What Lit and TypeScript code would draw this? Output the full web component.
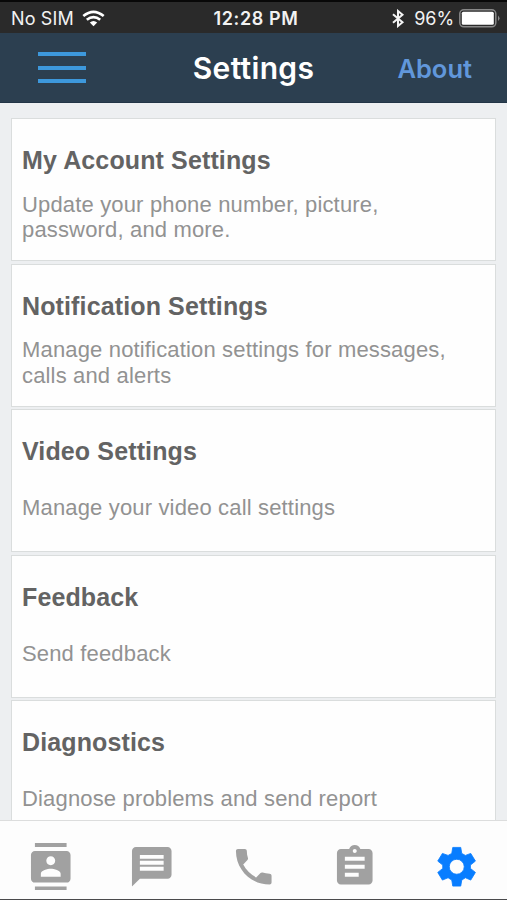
import { LitElement, html, css, svg } from "lit";
import { customElement } from "lit/decorators.js";
import { classMap } from "lit/directives/class-map.js";

interface Item { title: string; lines: string[]; }

const items: Item[] = [
  { title: "My Account Settings", lines: ["Update your phone number, picture,", "password, and more."] },
  { title: "Notification Settings", lines: ["Manage notification settings for messages,", "calls and alerts"] },
  { title: "Video Settings", lines: ["Manage your video call settings"] },
  { title: "Feedback", lines: ["Send feedback"] },
  { title: "Diagnostics", lines: ["Diagnose problems and send report"] },
];

const tabs = [
  { name: "Contacts", active: false, shape: svg`<path d="M20 0H4v2h16V0zM4 24h16v-2H4v2zM20 4H4c-1.1 0-2 .9-2 2v12c0 1.1.9 2 2 2h16c1.1 0 2-.9 2-2V6c0-1.1-.9-2-2-2zm-8 2.750c1.240 0 2.250 1.010 2.250 2.250s-1.010 2.250-2.250 2.250S9.750 10.240 9.750 9 10.760 6.750 12 6.750zM17 17H7v-1.500c0-1.670 3.330-2.500 5-2.500s5 .83 5 2.500V17z"/>` },
  { name: "Messages", active: false, shape: svg`<path d="M20 2H4c-1.1 0-1.990.9-1.990 2L2 22l4-4h14c1.1 0 2-.9 2-2V4c0-1.1-.9-2-2-2zM6 6h12v2H6V6zm0 3h12v2H6V9zm12 5H6v-2h12v2z"/>` },
  { name: "Calls", active: false, shape: svg`<path d="M6.620 10.790c1.440 2.830 3.760 5.140 6.590 6.590l2.200-2.200c.27-.27.67-.36 1.020-.24 1.120.37 2.330.57 3.570.57.55 0 1 .45 1 1V20c0 .55-.45 1-1 1-9.390 0-17-7.610-17-17 0-.55.45-1 1-1h3.500c.55 0 1 .45 1 1 0 1.250.2 2.450.57 3.570.11.35.03.74-.25 1.020l-2 2.200z"/>` },
  { name: "Tasks", active: false, shape: svg`<path d="M19 3h-4.180C14.400 1.840 13.300 1 12 1c-1.300 0-2.400.84-2.820 2H5c-1.1 0-2 .9-2 2v14c0 1.1.9 2 2 2h14c1.1 0 2-.9 2-2V5c0-1.1-.9-2-2-2zm-7 0c.55 0 1 .45 1 1s-.45 1-1 1-1-.45-1-1 .45-1 1-1zm2 14H7v-2h7v2zm3-4H7v-2h10v2zm0-4H7V7h10v2z"/>` },
  { name: "Settings", active: true, shape: svg`<path transform="translate(12 12) scale(.1684) translate(-79 -79)" fill-rule="evenodd" stroke="currentColor" stroke-width="2.500" stroke-linejoin="round" d="M67 21H91L94 39L105 45L121 39L135 62L120 74V84L135 96L121 119L105 112L94 119L91 137H67L64 119L53 112L36 119L22 96L37 84V74L22 62L36 39L53 45L64 39ZM79 56.500A22.500 22.500 0 1 0 79 101.500A22.500 22.500 0 1 0 79 56.500Z"/>` },
];

@customElement("app-root")
export class AppRoot extends LitElement {
  static styles = css`
    :host { display: flex; flex-direction: column; width: 507px; height: 900px; box-sizing: border-box;
      overflow: hidden; background: #edeff1; border-bottom: 1px solid #4a4a4c;
      font-family: "Liberation Sans", Arial, sans-serif; }
    * { box-sizing: border-box; }
    svg { display: block; flex: none; }
    .status { flex: none; height: 33px; border-top: 2px solid #080808; background: #2a2a2a; color: #f2f2f2;
      display: grid; grid-template-columns: 1fr auto 1fr; align-items: center;
      font: 400 18px/22px Inter, sans-serif; padding: 2px 7px 0 11px; white-space: nowrap; }
    .left, .right { display: flex; align-items: center; }
    .left { gap: 8px; }
    .carrier { letter-spacing: .15px; }
    .right { justify-content: flex-end; }
    .clock { font-weight: 600; letter-spacing: .62px; padding-left: 1px; }
    .pct { margin: 0 5px 0 9px; letter-spacing: -.1px; }
    .nav { flex: none; height: 70px; background: #2c3f50; border-bottom: 1px solid #223546;
      display: grid; grid-template-columns: 1fr auto 1fr; align-items: center;
      padding: 1px 35px 0 38px; font-family: Inter, sans-serif; }
    .menu { display: flex; flex-direction: column; gap: 9.300px; width: 48px; padding-bottom: 1px; }
    .bar { height: 4px; background: #3d98dc; }
    .heading { color: #fff; font-size: 30px; font-weight: 600; line-height: 36px; letter-spacing: .3px; padding-right: 3px; }
    .about { justify-self: end; color: #6197db; font-size: 25.500px; font-weight: 600; line-height: 32px; padding-top: 1px; }
    .list { flex: 1; min-height: 0; overflow: hidden; padding: 15.400px 11px 0; display: flex; flex-direction: column; gap: 2.400px; }
    .card { flex: none; height: 143px; background: #fefefe; border: 1px solid #dadddd;
      padding: 25px 10px 2px; display: flex; flex-direction: column; }
    .title { color: #636363; font-size: 25px; font-weight: 700; line-height: 32px; letter-spacing: .13px; }
    .body { flex: 1; display: flex; flex-direction: column; justify-content: center; color: #929292;
      font-size: 22px; line-height: 25.400px; letter-spacing: .16px; white-space: nowrap; }
    .tabs { flex: none; height: 79px; background: #fdfdfd; border-top: 1px solid #dcdddd;
      display: grid; grid-template-columns: repeat(5, 1fr); align-items: center; justify-items: center; padding: 13px 0 0; }
    .tab { color: #a1a1a1; }
    .tab.active { color: #087dff; }
    .tab svg { fill: currentColor; }
  `;

  render() {
    return html`
      <div class="status">
        <div class="left"><span class="carrier">No SIM</span>
          <svg width="23" height="17" viewBox="0 0 23 17" fill="none" stroke="#fff" stroke-width="2.700">
            <path d="M1.300 6Q11.500-2.400 21.700 6M4.800 9.800Q11.500 4.300 18.200 9.800"/>
            <path d="M7.800 12.400Q11.500 9.400 15.200 12.400L11.500 16.300z" fill="#fff" stroke="none"/>
          </svg>
        </div>
        <span class="clock">12:28 PM</span>
        <div class="right">
          <svg width="13" height="19" viewBox="0 0 13 19" fill="none" stroke="#f4f4f4" stroke-width="2"><path d="M1 5.200 10.500 13.300 6 17V2L10.500 5.700 1 13.800"/></svg>
          <span class="pct">96%</span>
          <svg width="41" height="19" viewBox="0 0 41 19"><rect x=".8" y=".8" width="36" height="17" rx="4" fill="none" stroke="#888" stroke-width="1.500"/><rect x="2.800" y="2.800" width="32" height="13" rx="1.500" fill="#fff"/><path d="M39 6.500q3 2.800 0 5.600z" fill="#888"/></svg>
        </div>
      </div>
      <div class="nav">
        <div class="menu"><div class="bar"></div><div class="bar"></div><div class="bar"></div></div>
        <span class="heading">Settings</span>
        <span class="about">About</span>
      </div>
      <div class="list">
        ${items.map(i => html`<div class="card"><div class="title">${i.title}</div><div class="body">${i.lines.map(l => html`<div class="line">${l}</div>`)}</div></div>`)}
      </div>
      <div class="tabs">
        ${tabs.map(t => html`<div class=${classMap({ tab: true, active: t.active })} aria-label=${t.name}><svg width="47.500" height="47.500" viewBox="0 0 24 24">${t.shape}</svg></div>`)}
      </div>`;
  }
}
